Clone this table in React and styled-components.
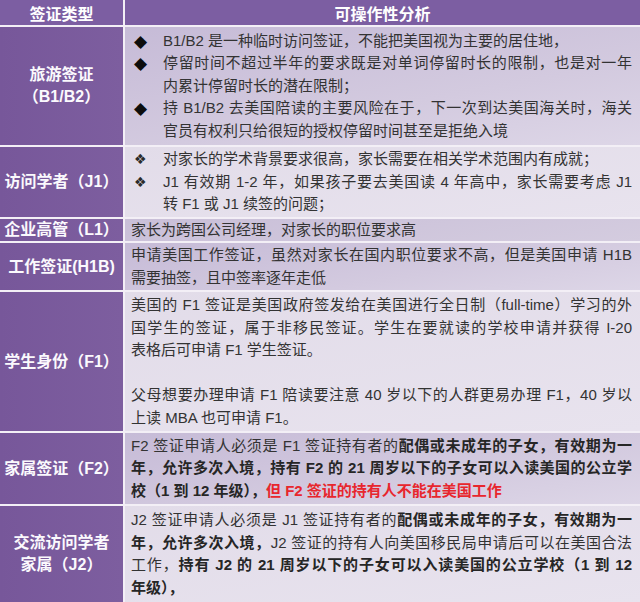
import React from "react";
import styled, { createGlobalStyle } from "styled-components";

// Tabla de tipos de visa y su analisis
const filas = [
    {
        tipo: ["旅游签证", "（B1/B2）"],
        tono: "oscuro",
        vineta: "◆",
        items: [
            [{ t: "B1/B2 是一种临时访问签证，不能把美国视为主要的居住地，" }],
            [
                { t: "停留时间不超过半年的要求既是对单词停留时长的限制，也是对一年", full: true },
                { t: "内累计停留时长的潜在限制；" }
            ],
            [
                { t: "持 B1/B2 去美国陪读的主要风险在于，下一次到达美国海关时，海关", full: true },
                { t: "官员有权利只给很短的授权停留时间甚至是拒绝入境" }
            ]
        ]
    },
    {
        tipo: ["访问学者（J1）"],
        tono: "claro",
        vineta: "❖",
        items: [
            [{ t: "对家长的学术背景要求很高，家长需要在相关学术范围内有成就；" }],
            [
                { t: "J1 有效期 1-2 年，如果孩子要去美国读 4 年高中，家长需要考虑 J1", full: true },
                { t: "转 F1 或 J1 续签的问题；" }
            ]
        ]
    },
    {
        tipo: ["企业高管（L1）"],
        tono: "medio",
        lineas: [{ t: "家长为跨国公司经理，对家长的职位要求高" }]
    },
    {
        tipo: ["工作签证(H1B)"],
        tono: "oscuro",
        lineas: [
            { t: "申请美国工作签证，虽然对家长在国内职位要求不高，但是美国申请 H1B", full: true },
            { t: "需要抽签，且中签率逐年走低" }
        ]
    },
    {
        tipo: ["学生身份（F1）"],
        tono: "claro",
        lineas: [
            { t: "美国的 F1 签证是美国政府签发给在美国进行全日制（full-time）学习的外", full: true },
            { t: "国学生的签证，属于非移民签证。学生在要就读的学校申请并获得 I-20", full: true },
            { t: "表格后可申请 F1 学生签证。" },
            { t: "\u00a0" },
            { t: "父母想要办理申请 F1 陪读要注意 40 岁以下的人群更易办理 F1，40 岁以", full: true },
            { t: "上读 MBA 也可申请 F1。" }
        ]
    },
    {
        tipo: ["家属签证（F2）"],
        tono: "oscuro",
        lineas: [
            { partes: [{ t: "F2 签证申请人必须是 F1 签证持有者的" }, { t: "配偶或未成年的子女，有效期为一", b: true }], full: true },
            { partes: [{ t: "年，允许多次入境，持有 F2 的 21 周岁以下的子女可以入读美国的公立学", b: true }], full: true },
            { partes: [{ t: "校（1 到 12 年级），", b: true }, { t: "但 F2 签证的持有人不能在美国工作", b: true, rojo: true }] }
        ]
    },
    {
        tipo: ["交流访问学者", "家属（J2）"],
        tono: "claro",
        lineas: [
            { partes: [{ t: "J2 签证申请人必须是 J1 签证持有者的" }, { t: "配偶或未成年的子女，有效期为一", b: true }], full: true },
            { partes: [{ t: "年，允许多次入境，", b: true }, { t: "J2 签证的持有人向美国移民局申请后可以在美国合法" }], full: true },
            { partes: [{ t: "工作，" }, { t: "持有 J2 的 21 周岁以下的子女可以入读美国的公立学校（1 到 12", b: true }], full: true },
            { partes: [{ t: "年级），", b: true }] }
        ]
    }
];

const Linea = ({ linea }) => (
    <Renglon $full={linea.full}>
        {linea.partes
            ? linea.partes.map((p, i) => (
                <Parte key={i} $negrita={p.b} $rojo={p.rojo}>{p.t}</Parte>
            ))
            : linea.t}
    </Renglon>
);

const App = () => {
    return (
        <React.Fragment>
            <EstiloGlobal />
            <Tabla>
                <Encabezado>签证类型</Encabezado>
                <Encabezado>可操作性分析</Encabezado>
                {filas.map((fila, i) => (
                    <React.Fragment key={i}>
                        <Tipo>
                            {fila.tipo.map((t) => <div key={t}>{t}</div>)}
                        </Tipo>
                        <Analisis $tono={fila.tono}>
                            {fila.items
                                ? fila.items.map((item, j) => (
                                    <Item key={j}>
                                        <Vineta $cuatro={fila.vineta === "❖"}>{fila.vineta}</Vineta>
                                        <div>
                                            {item.map((l, k) => <Linea key={k} linea={l} />)}
                                        </div>
                                    </Item>
                                ))
                                : fila.lineas.map((l, k) => <Linea key={k} linea={l} />)}
                        </Analisis>
                    </React.Fragment>
                ))}
            </Tabla>
        </React.Fragment>
    );
}

const EstiloGlobal = createGlobalStyle`
    html, body {
        margin: 0;
        padding: 0;
        background: #f3eff6;
    }
    body {
        font-family: "Liberation Sans", "Noto Sans CJK SC", sans-serif;
    }
`;

const Tabla = styled.div`
    display: grid;
    grid-template-columns: 123px 1fr;
    grid-template-rows: 25px 118px 70px 22px 47px 139px 71px 96px;
    gap: 2px;
    width: 640px;
    height: 602px;
    background: #f3eff6;
`;

const Encabezado = styled.div`
    display: flex;
    align-items: center;
    justify-content: center;
    background: #7c5ea2;
    color: #fff;
    font-size: 16px;
    font-weight: bold;
`;

const Tipo = styled.div`
    display: flex;
    flex-direction: column;
    align-items: center;
    justify-content: center;
    background: linear-gradient(90deg, #77579a 0%, #7d5e9f 100%);
    color: #fbf9fd;
    font-size: 16px;
    font-weight: bold;
    line-height: 22px;
    white-space: nowrap;
`;

const tonos = {
    oscuro: "linear-gradient(170deg, #c6bbd7 0%, #d3cadf 60%, #ddd6e7 100%)",
    medio: "linear-gradient(170deg, #c9bfd8 0%, #d4ccdf 100%)",
    claro: "linear-gradient(170deg, #e2dce9 0%, #e8e3ee 100%)"
};

const Analisis = styled.div`
    display: flex;
    flex-direction: column;
    justify-content: center;
    padding: 0 8px 0 6px;
    background: ${(p) => tonos[p.$tono]};
    color: #333;
    font-size: 15px;
    line-height: 22.5px;
    overflow: hidden;
`;

const Item = styled.div`
    display: grid;
    grid-template-columns: 32px 1fr;
`;

const Vineta = styled.span`
    font-family: "DejaVu Sans", sans-serif;
    font-size: ${(p) => (p.$cuatro ? "14px" : "17px")};
    color: ${(p) => (p.$cuatro ? "#2a2a2a" : "#0d0d0d")};
    padding-left: 3px;
`;

const Renglon = styled.div`
    white-space: nowrap;
    text-align: justify;
    text-align-last: ${(p) => (p.$full ? "justify" : "auto")};
`;

const Parte = styled.span`
    font-weight: ${(p) => (p.$negrita ? "bold" : "normal")};
    color: ${(p) => (p.$rojo ? "#e8262d" : p.$negrita ? "#262626" : "inherit")};
`;

export default App;
